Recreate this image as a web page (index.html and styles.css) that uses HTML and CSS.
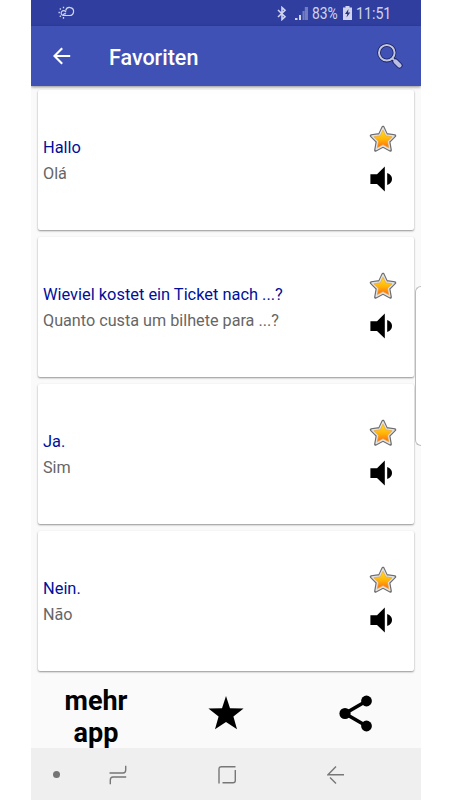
FILE: index.html
```html
<!DOCTYPE html>
<html lang="de">
<head>
<meta charset="utf-8">
<title>Favoriten</title>
<link rel="stylesheet" href="styles.css">
</head>
<body>
<svg width="0" height="0" class="defs">
  <defs>
    <linearGradient id="gold" x1="0" y1="0" x2="0" y2="1">
      <stop offset="0" stop-color="#ffe01c"/><stop offset=".55" stop-color="#ffb208"/><stop offset="1" stop-color="#ff6a10"/>
    </linearGradient>
    <symbol id="fav" viewBox="0 0 28 28">
      <path d="M14 2.2 17.5 9.6 25.8 10.7 19.9 16.7 21.4 25.2 14 21.2 6.6 25.2 8.1 16.7 2.2 10.7 10.5 9.6Z" fill="#ddd" stroke="#6c6c6c" stroke-width="3" stroke-linejoin="round"/>
      <path d="M14 2.7 17.3 9.9 25.1 11 19.5 16.6 20.9 24.6 14 20.8 7.1 24.6 8.5 16.6 2.9 11 10.7 9.9Z" fill="#e2e2e2" stroke="#e2e2e2" stroke-width="1.4" stroke-linejoin="round"/>
      <path d="M14 5.2 16.8 10.9 23.1 11.8 18.5 16.3 19.6 22.6 14 19.6 8.4 22.6 9.5 16.3 4.9 11.8 11.2 10.9Z" fill="url(#gold)" stroke="#ee9a24" stroke-width=".6"/>
    </symbol>
    <symbol id="speaker" viewBox="0 0 24 26">
      <path d="M.4 8.2H7L14.8.5V25.5L7 18H.4Z"/>
      <path d="M17.2 7Q22 8.8 22 13T17.2 19Z"/>
    </symbol>
  </defs>
</svg>
<main class="screen">
  <header class="status">
    <svg class="weather" width="17" height="14" viewBox="0 0 17 14">
      <path d="M5 9.5A2.5 2.5 0 1 1 8 6.2M5 9.5H11.5A4 4 0 1 0 7.7 4.5M5 9.5Q6 7 8 8" fill="none" stroke="currentColor" stroke-width="1.2"/>
      <path d="M.5 6.5h1.4M1.8 2.5l1 1M5.5.8v1.4M1.8 10.8l1-1M5.5 11v1.7" stroke="currentColor" stroke-width="1.3"/>
    </svg>
    <div class="indicators">
      <svg class="bluetooth" width="10" height="15" viewBox="0 0 10 15"><path d="M1 4 8 10.7 5 13.5V1.5L8 4.3 1 11" fill="none" stroke="currentColor" stroke-width="1.6"/></svg>
      <svg class="signal" width="14" height="13" viewBox="0 0 14 13"><path d="M0 11h2.5v2H0zM4 8h2v5H4z" fill="currentColor"/><path d="M7.5 4h2v9h-2zM9.8 0H13v13H9.8z" fill="currentColor" opacity=".42"/></svg>
      <span class="percent">83%</span>
      <svg class="battery" width="9" height="14" viewBox="0 0 9 14"><path d="M2.5 0h4v1.5H9V14H0V1.5h2.5z" fill="currentColor"/><path d="M5.5 3 2 8h2.3L3.5 11.5 7.2 6.5H5z" fill="#26327f"/></svg>
      <span class="clock">11:51</span>
    </div>
  </header>
  <nav class="appbar">
    <svg class="back" width="18" height="18" viewBox="0 0 18 18"><path d="M17.2 9H2M9.2 1.3 1.5 9l7.7 7.7" fill="none" stroke="#fff" stroke-width="2.1"/></svg>
    <h1>Favoriten</h1>
    <svg class="search" width="26" height="26" viewBox="0 0 26 26">
      <circle cx="9.8" cy="9.8" r="7.8" fill="none" stroke="#172060" stroke-width="3.6"/>
      <path d="M15 15l2.2 2.2" stroke="#172060" stroke-width="3.6"/>
      <path d="M18.5 18.5l4 4" stroke="#172060" stroke-width="6" stroke-linecap="round"/>
      <circle cx="9.8" cy="9.8" r="7.8" fill="none" stroke="#c3c6df" stroke-width="2"/>
      <path d="M15 15l2.2 2.2" stroke="#c3c6df" stroke-width="1.8"/>
      <path d="M18.5 18.5l4 4" stroke="#b9bee2" stroke-width="4.4" stroke-linecap="round"/>
    </svg>
  </nav>
  <section class="list">
    <article class="card"><div class="phrase"><p class="source">Hallo</p><p class="target">Olá</p></div><div class="actions"><svg class="fav"><use href="#fav"/></svg><svg class="speaker"><use href="#speaker"/></svg></div></article>
    <article class="card"><div class="phrase"><p class="source">Wieviel kostet ein Ticket nach ...?</p><p class="target">Quanto custa um bilhete para ...?</p></div><div class="actions"><svg class="fav"><use href="#fav"/></svg><svg class="speaker"><use href="#speaker"/></svg></div></article>
    <article class="card"><div class="phrase"><p class="source">Ja.</p><p class="target">Sim</p></div><div class="actions"><svg class="fav"><use href="#fav"/></svg><svg class="speaker"><use href="#speaker"/></svg></div></article>
    <article class="card"><div class="phrase"><p class="source">Nein.</p><p class="target">Não</p></div><div class="actions"><svg class="fav"><use href="#fav"/></svg><svg class="speaker"><use href="#speaker"/></svg></div></article>
  </section>
  <footer class="tabs">
    <div class="more">mehr<br>app</div>
    <div class="tab"><svg width="36" height="34" viewBox="0 0 36 34"><path d="M18 0 22 12.3 35.6 12.6 25.4 20.4 29 33.3 18 26 7 33.3 10.6 20.4.4 12.6 14 12.3Z"/></svg></div>
    <div class="tab"><svg width="34" height="37" viewBox="0 0 34 37"><path d="M27.5 6 6 18.5 27.5 31" fill="none" stroke="#000" stroke-width="3.6"/><circle cx="27.5" cy="6" r="5.4"/><circle cx="6" cy="18.5" r="5.6"/><circle cx="27.5" cy="31" r="5.4"/></svg></div>
  </footer>
  <nav class="system">
    <span class="dot"></span>
    <svg class="recents" width="18" height="20" viewBox="0 0 18 20"><path d="M.5 8H14Q16.7 8 16.7 5V.8M17.2 12H4Q1.3 12 1.3 15V19.2"/></svg>
    <svg class="home" width="18" height="20" viewBox="0 0 18 20"><path d="M17.5 1.7H3.5Q1 1.7 1 4.2V18.5M17.3 5V15.5Q17.3 17.8 15 17.8H4.5"/></svg>
    <svg class="sysback" width="18" height="20" viewBox="0 0 18 20"><path d="M17 9.8H1L9 1.5M3 12.5 9 18.5"/></svg>
  </nav>
  <div class="edge"></div>
</main>
</body>
</html>
```

FILE: styles.css
```css
* { box-sizing: border-box; }
body { margin: 0; background: #fff; font-family: Roboto, sans-serif; overflow: hidden; }
h1, p { margin: 0; }
svg { display: block; flex: none; }
.defs { position: absolute; }
.screen { position: relative; width: 390px; height: 800px; margin-left: 31px; background: #fafafa; display: flex; flex-direction: column; overflow: hidden; }
.status { height: 26px; flex: none; background: #303f9f; color: #cfd3ec; display: flex; align-items: center; justify-content: space-between; padding: 0 30px 0 27px; }
.indicators { display: flex; align-items: center; }
.bluetooth { margin-right: 8px; }
.signal { margin-right: 3px; }
.percent, .clock { font-size: 16.5px; line-height: 26px; padding-top: 1px; transform: scaleX(.84); transform-origin: left center; white-space: nowrap; }
.percent { width: 27px; margin-right: 4px; }
.clock { width: 35px; transform: scaleX(.86); }
.battery { margin-right: 4px; }
.appbar { position: relative; height: 60px; flex: none; background: #3f51b5; display: flex; align-items: center; padding: 0 18px 0 22px; box-shadow: 0 1px 3px rgba(0,0,0,.45); }
.appbar h1 { margin-left: 38px; flex: 1; font-size: 21.5px; font-weight: 500; color: #fff; line-height: 60px; padding-top: 3px; }
.list { flex: none; display: flex; flex-direction: column; gap: 7px; padding: 4px 7px 0; }
.card { height: 140px; background: #fff; border-radius: 2px; box-shadow: 0 1px 2px rgba(0,0,0,.42); display: flex; justify-content: space-between; padding: 0 17px 0 5px; }
.phrase { padding-top: 45px; font-size: 16.4px; line-height: 26px; white-space: nowrap; }
.source { color: #00109a; }
.target { color: #666; font-size: 16.2px; }
.actions { width: 28px; padding-top: 35px; }
.fav { width: 28px; height: 28px; }
.speaker { width: 24px; height: 26px; margin: 13px 0 0 1px; }
.tabs { height: 77px; flex: none; display: grid; grid-template-columns: 1fr 1fr 1fr; align-items: center; overflow: hidden; }
.more { font-size: 27px; line-height: 32px; font-weight: 700; text-align: center; padding-top: 14px; }
.tab { display: flex; justify-content: center; padding-top: 6px; }
.system { height: 52px; background: #efefef; display: flex; align-items: center; padding: 1px 0 0 22px; }
.system path { fill: none; stroke: #777; stroke-width: 1.4; }
.dot { width: 7px; height: 7px; border-radius: 50%; background: #757575; }
.recents { margin-left: 48.5px; }
.home { margin-left: 91px; }
.sysback { margin-left: 91px; }
.edge { position: absolute; right: 0; top: 286px; width: 6px; height: 160px; background: #fff; border: 1px solid #bbb; border-right: 0; border-radius: 6px 0 0 6px; }
```
